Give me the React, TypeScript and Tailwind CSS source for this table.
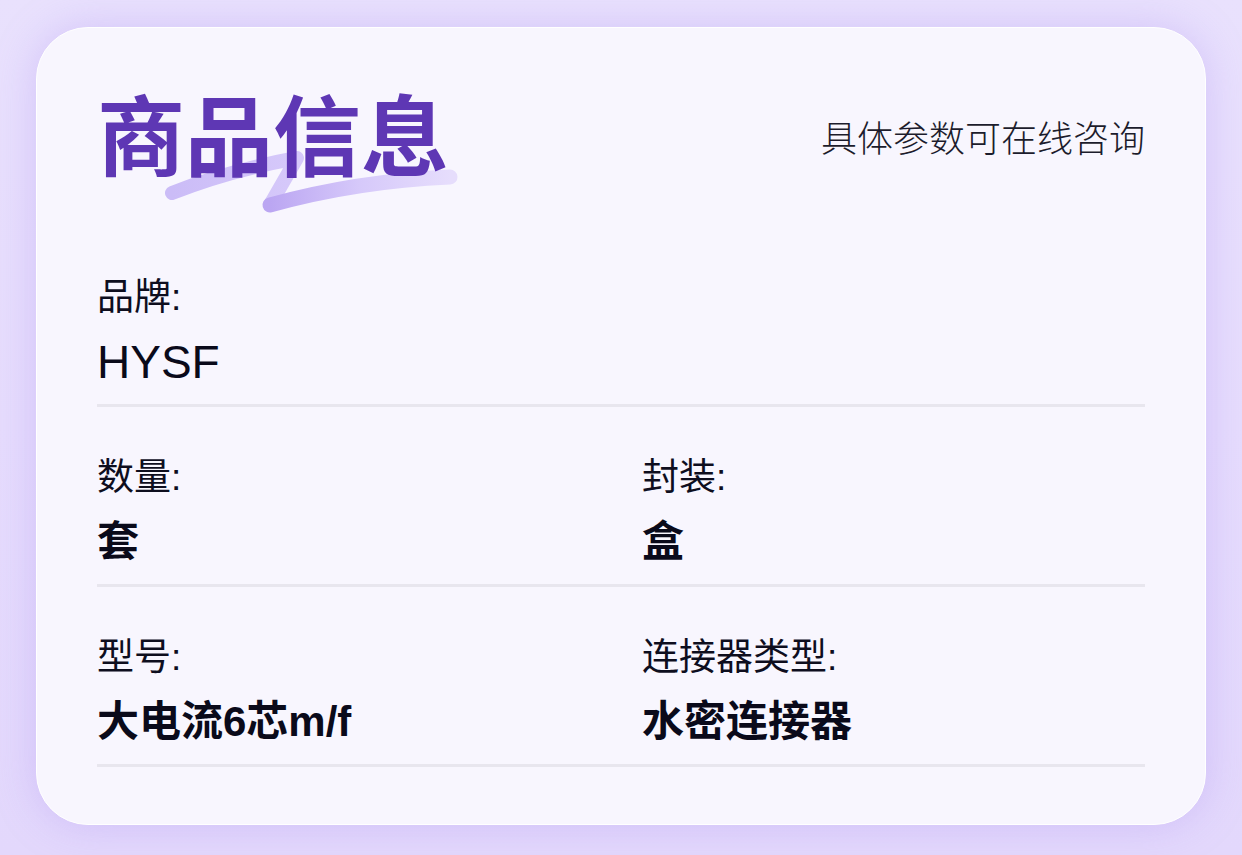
import React from "react";

const font = { fontFamily: '"Liberation Sans", "Noto Sans CJK SC", sans-serif' };

type Field = { label: string; value: string; bold?: boolean };

const rows: Field[][] = [
  [{ label: "品牌:", value: "HYSF" }],
  [
    { label: "数量:", value: "套", bold: true },
    { label: "封装:", value: "盒", bold: true },
  ],
  [
    { label: "型号:", value: "大电流6芯m/f", bold: true },
    { label: "连接器类型:", value: "水密连接器", bold: true },
  ],
];

function Brush() {
  return (
    <svg
      className="absolute left-[60px] top-[50px] pointer-events-none"
      width="310"
      height="80"
      viewBox="0 0 310 80"
    >
      <defs>
        <linearGradient id="brushA" x1="0" y1="0" x2="1" y2="0">
          <stop offset="0" stopColor="#cbbcf7" />
          <stop offset="1" stopColor="#d6c9fa" />
        </linearGradient>
        <linearGradient id="brushB" x1="0" y1="0" x2="1" y2="0">
          <stop offset="0" stopColor="#bba6f2" />
          <stop offset="0.5" stopColor="#d6c9fa" />
          <stop offset="1" stopColor="#e6ddfc" />
        </linearGradient>
      </defs>
      {/* swoosh under the title, coords relative to the title box */}
      <path
        d="M15 48 Q 70 26 140 13 L 113 60"
        fill="none"
        stroke="url(#brushA)"
        strokeWidth="14"
        strokeLinecap="round"
        strokeLinejoin="round"
      />
      <path
        d="M113 60 Q 200 36 293 32"
        fill="none"
        stroke="url(#brushB)"
        strokeWidth="15"
        strokeLinecap="round"
      />
    </svg>
  );
}

export default function App() {
  return (
    <div
      className="w-[1242px] h-[855px] overflow-hidden bg-gradient-to-b from-[#e9e1fd] via-[#e6dcfd] to-[#e3d8fc] pt-[27px] pl-[36px]"
      style={font}
    >
      <div className="w-[1170px] h-[798px] rounded-[52px] bg-[#f8f6fe] border border-white shadow-[0_0_40px_rgba(170,140,240,0.35)] px-[60px]">
        {/* header */}
        <div className="h-[199px] flex items-center justify-between pt-[2px]">
          <div className="relative mt-[20px]">
            <Brush />
            <h1 className="relative text-[88px] leading-[88px] font-bold text-[#5e37b4]">
              商品信息
            </h1>
          </div>
          <p className="text-[36px] leading-[44px] font-light text-[#1c1c2c] mt-[22px]">
            具体参数可在线咨询
          </p>
        </div>

        {/* fields */}
        {rows.map((row, i) => (
          <div
            key={i}
            className="grid grid-cols-[545px_1fr] pt-[49px] pb-[16px] border-b-[3px] border-[#e8e6ee]"
          >
            {row.map((f) => (
              <div key={f.label} className="flex flex-col gap-[16px]">
                <span className="text-[37px] leading-[44px] text-[#0e0e1e]">{f.label}</span>
                <span
                  className={`leading-[52px] text-[#0a0a1a] ${
                    f.bold ? "text-[42px] font-bold" : "text-[46px] font-normal"
                  }`}
                >
                  {f.value}
                </span>
              </div>
            ))}
          </div>
        ))}
      </div>
    </div>
  );
}
